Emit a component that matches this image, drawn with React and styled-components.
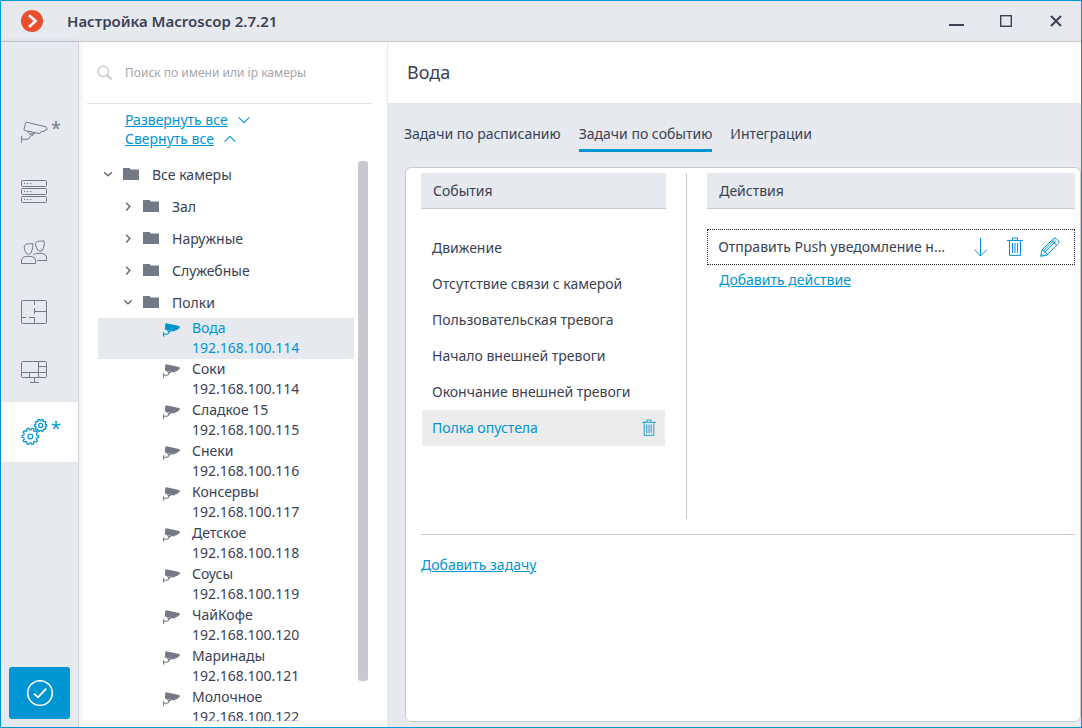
import { useState } from 'react';
import styled, { createGlobalStyle } from 'styled-components';

const GlobalStyle = createGlobalStyle`
  * {
    box-sizing: border-box;
  }

  body {
    margin: 0;
    font-family: 'Noto Sans', 'Open Sans', sans-serif;
    font-size: 14px;
    color: #3a4254;
  }

  button, input {
    font: inherit;
    color: inherit;
    margin: 0;
    padding: 0;
    border: 0;
    background: none;
  }

  button {
    cursor: pointer;
  }

  ul {
    margin: 0;
    padding: 0;
    list-style: none;
  }

  svg {
    display: block;
    flex: none;
  }
`;

const Window = styled.div`
  display: flex;
  flex-direction: column;
  height: 100vh;
  border: 1px solid #0095d3;
  background: #fff;
`;

const TitleBar = styled.header`
  display: flex;
  align-items: center;
  flex: none;
  height: 41px;
  padding: 0 12px 0 20px;
  background: #e6e9ee;
  border-bottom: 1px solid #c8c8d0;

  h1{
    flex: 1;
    margin: 0 0 0 24px;
    font-size: 15px;
    font-weight: 600;
  }
`;

const WindowButtons = styled.div`
  display: flex;
  gap: 24px;

  button{
    display: flex;
    align-items: center;
    justify-content: center;
    width: 26px;
    height: 26px;
  }
`;

const Body = styled.div`
  display: flex;
  flex: 1;
  min-height: 0;
`;

const Sidebar = styled.nav`
  display: flex;
  flex-direction: column;
  justify-content: space-between;
  flex: none;
  width: 78px;
  padding: 60px 0 8px;
  background: #e6e9ee;
  border-right: 1px solid #cfd1d8;
  box-shadow: 0 0 6px rgba(60, 80, 120, 0.15);
`;

const NavButton = styled.button`
  display: flex;
  align-items: center;
  width: 100%;
  height: 60px;
  padding-left: 20px;
  gap: 3px;
  color: ${props => (props.$active ? '#0095d3' : '#737986')};
  background: ${props => (props.$active ? '#fff' : 'transparent')};

  span{
    margin-bottom: 8px;
    font-size: 18px;
    line-height: 24px;
  }
`;

const ApplyButton = styled.button`
  display: flex;
  align-items: center;
  justify-content: center;
  height: 52px;
  margin: 0 8px;
  border-radius: 3px;
  background: #0095d3;
  color: #fff;
`;

const CameraPanel = styled.aside`
  display: flex;
  flex-direction: column;
  flex: none;
  width: 309px;
  padding-bottom: 6px;
  border-right: 1px solid #e6e9ee;
`;

const SearchBox = styled.label`
  display: flex;
  align-items: center;
  flex: none;
  height: 62px;
  margin: 0 15px 0 8px;
  padding-left: 10px;
  gap: 12px;
  border-bottom: 1px solid #e2e2e6;

  input{
    flex: 1;
    min-width: 0;
    font-size: 12px;
    outline: none;
  }

  input::placeholder{
    color: #a6a6aa;
    opacity: 1;
  }
`;

const TreeLinks = styled.div`
  display: flex;
  flex-direction: column;
  align-items: flex-start;
  flex: none;
  height: 54px;
  padding: 6px 0 0 46px;

  a{
    display: flex;
    align-items: center;
    gap: 10px;
    line-height: 19px;
  }
`;

const Link = styled.a`
  color: #0095d3;
  text-decoration: underline;
`;

const TreeArea = styled.div`
  display: flex;
  flex: 1;
  min-height: 0;
  gap: 4px;
  padding: 0 19px;
`;

const Tree = styled.ul`
  flex: 1;
  min-width: 0;
  overflow: hidden;
`;

const FolderRow = styled.button`
  display: flex;
  align-items: center;
  width: 100%;
  height: 32px;
  padding-left: ${props => 5 + props.$level * 20}px;

  span{
    margin-left: 13px;
  }
`;

const FolderIcon = styled.svg`
  margin-left: 10px;
`;

const CameraRow = styled.button`
  display: flex;
  align-items: flex-start;
  width: 100%;
  height: 41px;
  padding-left: 65px;
  gap: 11px;
  text-align: left;
  line-height: 20px;
  color: ${props => (props.$active ? '#0095d3' : 'inherit')};
  background: ${props => (props.$active ? '#e6e9ee' : 'transparent')};

  svg{
    margin-top: 5px;
    color: ${props => (props.$active ? '#0095d3' : '#737986')};
  }

  span{
    display: block;
  }
`;

const ScrollTrack = styled.div`
  width: 10px;
  padding: 3px 0 40px;
`;

const ScrollThumb = styled.div`
  height: 100%;
  border-radius: 3px;
  background: #c9c8cf;
`;

const Main = styled.main`
  display: flex;
  flex-direction: column;
  flex: 1;
  min-width: 0;
  background: #e6e9ee;
`;

const PageTitle = styled.h2`
  flex: none;
  margin: 0;
  padding-left: 19px;
  font-size: 18px;
  font-weight: 400;
  line-height: 61px;
  background: #fff;
`;

const Tabs = styled.div`
  display: flex;
  flex: none;
  gap: 18px;
  padding: 19px 16px 15px;
`;

const Tab = styled.button`
  height: 30px;
  line-height: 24px;
  padding-bottom: 3px;
  border-bottom: 3px solid ${props => (props.$active ? '#0095d3' : 'transparent')};
`;

const Card = styled.section`
  flex: 1;
  min-height: 0;
  margin: 0 0 5px 17px;
  padding: 5px 5px 0 15px;
  border: 1px solid #c8c8d0;
  border-radius: 6px;
  background: #fff;
`;

const Columns = styled.div`
  display: grid;
  grid-template-columns: 2fr 1px 3fr;
  gap: 20px;
  min-height: 346px;
  margin-bottom: 15px;
`;

const Divider = styled.div`
  background: #c8c8d0;
`;

const Column = styled.div`
  min-width: 0;

  h3{
    height: 36px;
    margin: 0 0 20px;
    padding-left: 12px;
    font-size: 14px;
    font-weight: 400;
    line-height: 35px;
    background: #e6e9ee;
    border-bottom: 1px solid #c8c8d0;
  }
`;

const EventList = styled.ul`
  padding: 1px;
`;

const EventItem = styled.li`
  display: flex;
  align-items: center;
  height: 36px;
  padding: 0 9px 0 10px;
  color: ${props => (props.$active ? '#0095d3' : 'inherit')};
  background: ${props => (props.$active ? '#ececec' : 'transparent')};

  button:first-child{
    flex: 1;
    height: 36px;
    padding-bottom: 2px;
    text-align: left;
  }
`;

const ActionRow = styled.div`
  display: flex;
  align-items: center;
  height: 36px;
  margin-bottom: 4px;
  padding: 0 14px 0 10px;
  gap: 17px;
  border: 1px dotted #222;

  span{
    flex: 1;
    min-width: 0;
    padding: 0 8px 2px 0;
    overflow: hidden;
    text-overflow: ellipsis;
    white-space: nowrap;
  }
`;

const IconButton = styled.button`
  color: #0095d3;
`;

const LinkRow = styled.div`
  padding-left: ${props => (props.$indent ? 12 : 0)}px;
  line-height: 22px;
`;

const Footer = styled.div`
  padding-top: 19px;
  border-top: 1px solid #c8c8d0;
`;

const stroke = { fill: 'none', stroke: 'currentColor', strokeLinejoin: 'round' };

function gearPath(cx, cy, outer, inner, teeth) {
  const points = [];
  const step = (Math.PI * 2) / teeth;
  for (let i = 0; i < teeth; i++) {
    const a = i * step;
    [[-0.32, inner], [-0.2, outer], [0.2, outer], [0.32, inner]].forEach(([k, r]) => {
      const x = cx + Math.cos(a + k * step) * r;
      const y = cy + Math.sin(a + k * step) * r;
      points.push(`${x.toFixed(2)} ${y.toFixed(2)}`);
    });
  }
  return `M${points.join('L')}Z`;
}

const Logo = () => (
  <svg width="22" height="22" viewBox="0 0 22 22">
    <circle cx="11" cy="11" r="11" fill="#e94e2e" />
    <path d="M8 5.2L14.6 11L8 17" fill="none" stroke="#fff" strokeWidth="2.6" />
  </svg>
);

const CameraOutline = () => (
  <svg width="27" height="24" viewBox="0 0 27 24" {...stroke}>
    <path d="M6 2.3L24 6.6Q26 7.2 26 8.4V9.6L24.4 9.8L23.6 11.2L20.4 11.4L18.6 13.6L4 10.6Q2.8 10.2 3 9.2L4.6 3.4Q5 2.1 6 2.3Z" />
    <path d="M6.4 11.4L8.4 13.8H12L14 13M9.4 14.2Q9.6 15.8 12 15.4L12.6 14.2M10 15.6Q9 18.9 6 19.3H.6M.6 15.8V22.8" />
  </svg>
);

const ServersIcon = () => (
  <svg width="27" height="24" viewBox="0 0 27 24" {...stroke}>
    {[0.5, 8.5, 16.5].map(y => (
      <g key={y}>
        <rect x=".5" y={y} width="25" height="6" rx="1" />
        <path d={`M3 ${y + 3}h1.2M6 ${y + 3}h1.2M9 ${y + 3}h1.2`} strokeWidth="1.2" />
      </g>
    ))}
  </svg>
);

const UsersIcon = () => (
  <svg width="27" height="24" viewBox="0 0 27 24" {...stroke}>
    <path d="M3.4 9Q2.4 4.6 6 3.8Q8.6 4.4 11.8 3.4Q12 6.4 11.4 9Q10.4 14.4 7.6 14.4Q4.6 14.4 3.4 9Z" />
    <path d="M14.8 6Q13.8 1.6 17.4 1.2Q20.6 1.6 22.8.6Q23.8 3.4 23 6Q22 11.4 19.2 11.4Q16.2 11.4 14.8 6Z" />
    <path d="M.5 23.5V20Q1.2 16.8 5 16.4H10Q14 16.8 14.7 20V23.5Z" />
    <path d="M12.4 14.6Q14.4 13.4 17 13.4H21Q25 13.8 25.6 17V20.5H16.4" />
  </svg>
);

const PlanIcon = () => (
  <svg width="27" height="24" viewBox="0 0 27 24" {...stroke}>
    <rect x=".5" y=".5" width="25" height="23" rx="1" />
    <path d="M13.5.5V5M13.5 8V14M13.5 11.5H25.5M.5 17.5H5M8 17.5H13.5V23.5" />
  </svg>
);

const MonitorIcon = () => (
  <svg width="27" height="24" viewBox="0 0 27 24" {...stroke}>
    <rect x=".5" y="1.5" width="25" height="16" rx="1" />
    <path d="M17.5 1.5V17.5M17.5 6.5H25.5M.5 12.5H25.5M8.5 12.5V17.5M13.5 17.5V22.5M9 22.5H18" />
  </svg>
);

const GearsIcon = () => (
  <svg width="27" height="28" viewBox="0 0 27 28" {...stroke} strokeWidth="1.2">
    <path d={gearPath(9.3, 18.4, 8.3, 6.6, 10)} />
    <circle cx="9.3" cy="18.4" r="2.4" />
    <path d={gearPath(19.6, 7.4, 6.2, 4.9, 10)} />
    <circle cx="19.6" cy="7.4" r="2" />
  </svg>
);

const CheckIcon = () => (
  <svg width="28" height="28" viewBox="0 0 28 28" {...stroke}>
    <circle cx="14" cy="14" r="12.3" strokeWidth="1.6" />
    <path d="M8 14.6L12 18.4L20.2 9.6" strokeWidth="1.8" />
  </svg>
);

const SearchIcon = () => (
  <svg width="16" height="16" viewBox="0 0 16 16" fill="none" stroke="#c2c1ca">
    <circle cx="6.3" cy="6.3" r="5.2" strokeWidth="1.2" />
    <path d="M10.2 10.2L14.6 14.4" strokeWidth="1.8" />
  </svg>
);

const LinkChevron = ({ up }) => (
  <svg width="12" height="8" viewBox="0 0 12 8" {...stroke} strokeWidth="1.1">
    <path d={up ? 'M.6 6.6L6 1.4L11.4 6.6' : 'M.6 1.4L6 6.6L11.4 1.4'} />
  </svg>
);

const TreeChevron = ({ open }) => (
  <svg width="10" height="10" viewBox="0 0 10 10" fill="none" stroke="#5f6675" strokeWidth="1.4">
    <path d={open ? 'M1.2 3.2L5 6.8L8.8 3.2' : 'M3.2 1.8L6.8 5.6L3.2 9.4'} />
  </svg>
);

const CameraSolid = () => (
  <svg width="18" height="15" viewBox="0 0 18 15">
    <path d="M3.4.3L16 3Q17 3.4 16.8 4.6L16.4 5.4L15 5.8L14.4 7L12.6 7.2L11 8.6L1.8 6.4L2.2 1.6Q2.6.2 3.4.3Z" fill="currentColor" />
    <path d="M4.4 7.2L5.6 8.6L8.2 8.4M6.4 8.6Q5.6 11.4 3 11.2H.6M.6 9.2V13.8" fill="none" stroke="currentColor" strokeWidth="1.1" />
  </svg>
);

const ArrowIcon = () => (
  <svg width="16" height="20" viewBox="0 0 16 20" {...stroke}>
    <path d="M6.5 1V19M.5 12.6L6.5 19L12.8 12.6" />
  </svg>
);

const TrashIcon = ({ size }) => (
  <svg width={size} height={size + 4} viewBox="0 0 16 20" {...stroke}>
    <path d="M0 3.5H16M5.5 3.5V.9H10.5V3.5M2.5 3.5V18.4H13.5V3.5M5.5 6V16M8 6V16M10.5 6V16" />
  </svg>
);

const PencilIcon = () => (
  <svg width="20" height="20" viewBox="0 0 20 20" {...stroke}>
    <path d="M.7 19.3L2 12.9L13.6 1.5Q14.8.4 16 1.4L18.6 4Q19.6 5.2 18.5 6.4L7 18L.7 19.3ZM2 12.9L3.9 13.4L4.5 15.4L6.5 16L7 18M3.9 13.4L15.2 2.4M4.5 15.4L15.6 4.4M11.7 3.4L16.5 8.3M.9 17.4L2.6 19" />
  </svg>
);

const navItems = [
  { id: 'cameras', label: 'Камеры', Icon: CameraOutline, changed: true },
  { id: 'servers', label: 'Серверы', Icon: ServersIcon },
  { id: 'users', label: 'Пользователи', Icon: UsersIcon },
  { id: 'plans', label: 'Планы', Icon: PlanIcon },
  { id: 'screens', label: 'Экраны', Icon: MonitorIcon },
  { id: 'tasks', label: 'Задачи', Icon: GearsIcon, changed: true },
];

const folders = [
  { name: 'Все камеры', level: 0, open: true },
  { name: 'Зал', level: 1 },
  { name: 'Наружные', level: 1 },
  { name: 'Служебные', level: 1 },
  { name: 'Полки', level: 1, open: true },
];

const cameras = [
  { name: 'Вода', ip: '192.168.100.114' },
  { name: 'Соки', ip: '192.168.100.114' },
  { name: 'Сладкое 15', ip: '192.168.100.115' },
  { name: 'Снеки', ip: '192.168.100.116' },
  { name: 'Консервы', ip: '192.168.100.117' },
  { name: 'Детское', ip: '192.168.100.118' },
  { name: 'Соусы', ip: '192.168.100.119' },
  { name: 'ЧайКофе', ip: '192.168.100.120' },
  { name: 'Маринады', ip: '192.168.100.121' },
  { name: 'Молочное', ip: '192.168.100.122' },
];

const tabs = ['Задачи по расписанию', 'Задачи по событию', 'Интеграции'];

const events = [
  'Движение',
  'Отсутствие связи с камерой',
  'Пользовательская тревога',
  'Начало внешней тревоги',
  'Окончание внешней тревоги',
  'Полка опустела',
];

export default function App() {
  const [section, setSection] = useState('tasks');
  const [camera, setCamera] = useState('Вода');
  const [tab, setTab] = useState(tabs[1]);
  const [event, setEvent] = useState('Полка опустела');

  return (
    <>
      <GlobalStyle />
      <Window>
        <TitleBar>
          <Logo />
          <h1>Настройка Macroscop 2.7.21</h1>
          <WindowButtons>
            <button aria-label="Свернуть">
              <svg width="15" height="14" viewBox="0 0 15 14"><path d="M0 11H15" stroke="#3a4254" strokeWidth="2" /></svg>
            </button>
            <button aria-label="Развернуть">
              <svg width="12" height="12" viewBox="0 0 12 12"><rect x=".7" y=".7" width="10.6" height="10.6" fill="none" stroke="#3a4254" strokeWidth="1.4" /></svg>
            </button>
            <button aria-label="Закрыть">
              <svg width="12" height="12" viewBox="0 0 12 12"><path d="M1 1L11 11M11 1L1 11" stroke="#3a4254" strokeWidth="2" /></svg>
            </button>
          </WindowButtons>
        </TitleBar>

        <Body>
          <Sidebar>
            <div>
              {navItems.map(({ id, label, Icon, changed }) => (
                <NavButton key={id} aria-label={label} $active={section === id} onClick={() => setSection(id)}>
                  <Icon />
                  {changed && <span>*</span>}
                </NavButton>
              ))}
            </div>
            <ApplyButton aria-label="Применить"><CheckIcon /></ApplyButton>
          </Sidebar>

          <CameraPanel>
            <SearchBox>
              <SearchIcon />
              <input type="text" placeholder="Поиск по имени или ip камеры" />
            </SearchBox>
            <TreeLinks>
              <Link href="#expand">Развернуть все <LinkChevron /></Link>
              <Link href="#collapse">Свернуть все <LinkChevron up /></Link>
            </TreeLinks>
            <TreeArea>
              <Tree>
                {folders.map(folder => (
                  <li key={folder.name}>
                    <FolderRow $level={folder.level}>
                      <TreeChevron open={folder.open} />
                      <FolderIcon width="16" height="13" viewBox="0 0 16 13">
                        <path d="M0 0H6.5L8 1.5H16V12H0Z" fill="#737986" />
                      </FolderIcon>
                      <span>{folder.name}</span>
                    </FolderRow>
                  </li>
                ))}
                {cameras.map(({ name, ip }) => (
                  <li key={name}>
                    <CameraRow $active={camera === name} onClick={() => setCamera(name)}>
                      <CameraSolid />
                      <div>
                        <span>{name}</span>
                        <span>{ip}</span>
                      </div>
                    </CameraRow>
                  </li>
                ))}
              </Tree>
              <ScrollTrack><ScrollThumb /></ScrollTrack>
            </TreeArea>
          </CameraPanel>

          <Main>
            <PageTitle>{camera}</PageTitle>
            <Tabs>
              {tabs.map(name => (
                <Tab key={name} $active={tab === name} onClick={() => setTab(name)}>{name}</Tab>
              ))}
            </Tabs>
            <Card>
              <Columns>
                <Column>
                  <h3>События</h3>
                  <EventList>
                    {events.map(name => (
                      <EventItem key={name} $active={event === name}>
                        <button onClick={() => setEvent(name)}>{name}</button>
                        {event === name && (
                          <IconButton aria-label="Удалить событие"><TrashIcon size={14} /></IconButton>
                        )}
                      </EventItem>
                    ))}
                  </EventList>
                </Column>
                <Divider />
                <Column>
                  <h3>Действия</h3>
                  <ActionRow>
                    <span>Отправить Push уведомление на мобильные устройства</span>
                    <IconButton aria-label="Вниз"><ArrowIcon /></IconButton>
                    <IconButton aria-label="Удалить действие"><TrashIcon size={16} /></IconButton>
                    <IconButton aria-label="Изменить действие"><PencilIcon /></IconButton>
                  </ActionRow>
                  <LinkRow $indent>
                    <Link href="#add-action">Добавить действие</Link>
                  </LinkRow>
                </Column>
              </Columns>
              <Footer>
                <LinkRow>
                  <Link href="#add-task">Добавить задачу</Link>
                </LinkRow>
              </Footer>
            </Card>
          </Main>
        </Body>
      </Window>
    </>
  );
}
